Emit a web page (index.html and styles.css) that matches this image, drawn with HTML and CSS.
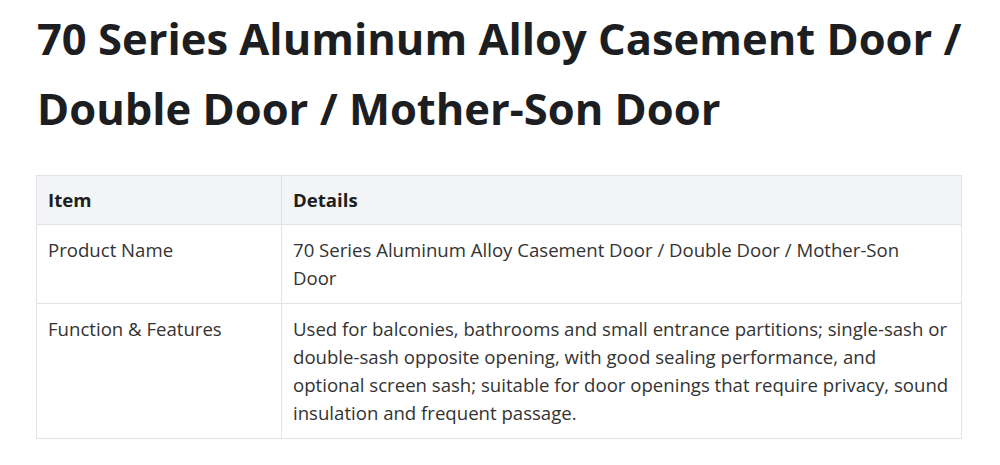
FILE: index.html
```html
<!DOCTYPE html>
<html lang="en">
<head>
<meta charset="utf-8">
<title>70 Series Aluminum Alloy Casement Door</title>
<link rel="stylesheet" href="styles.css">
</head>
<body>
<main class="page">
  <h1 class="title">70 Series Aluminum Alloy Casement Door / Double Door / Mother-Son Door</h1>
  <table class="spec">
    <thead>
      <tr><th class="col-item">Item</th><th>Details</th></tr>
    </thead>
    <tbody>
      <tr><td>Product Name</td><td>70 Series Aluminum Alloy Casement Door / Double Door / Mother-Son<br>Door</td></tr>
      <tr><td>Function &amp; Features</td><td>Used for balconies, bathrooms and small entrance partitions; single-sash or double-sash opposite opening, with good sealing performance, and optional screen sash; suitable for door openings that require privacy, sound insulation and frequent passage.</td></tr>
    </tbody>
  </table>
</main>
</body>
</html>
```
FILE: styles.css
```css
html, body { margin: 0; padding: 0; background: #fff; }
body { font-family: "Open Sans", "Noto Sans", sans-serif; color: #333; }
.page { padding: 4px 30px 0 36px; }
.title {
  margin: 0 0 31px 1px;
  font-size: 43.5px;
  line-height: 70px;
  font-weight: 700;
  color: #1c1e21;
}
.spec {
  width: 926px;
  border-collapse: collapse;
  font-size: 18.6px;
  line-height: 28px;
}
.spec th, .spec td {
  border: 1px solid #e1e3e6;
  padding: 11px 9px 11px 11px;
  text-align: left;
  vertical-align: top;
}
.spec th {
  padding-top: 10px;
  padding-bottom: 10px;
  background: #f3f4f6;
  font-weight: 700;
  color: #1c1e21;
}
.spec .col-item { width: 224px; }
```
